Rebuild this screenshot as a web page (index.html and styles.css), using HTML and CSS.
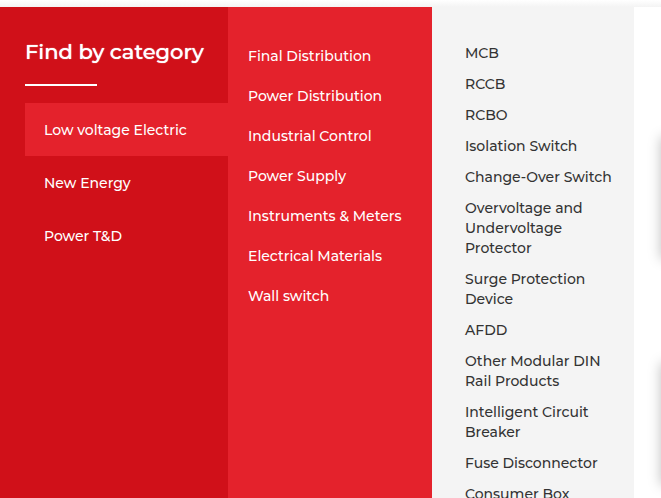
FILE: index.html
```html
<!DOCTYPE html>
<html lang="en">
<head>
<meta charset="utf-8">
<meta name="viewport" content="width=device-width, initial-scale=1">
<title>Find by category</title>
<link rel="stylesheet" href="styles.css">
</head>
<body>
<div class="topbar"></div>
<div class="mega">
  <nav class="categories" aria-label="Categories">
    <h2 class="title">Find by category</h2>
    <ul class="list">
      <li><a class="category active" href="#">Low voltage Electric</a></li>
      <li><a class="category" href="#">New Energy</a></li>
      <li><a class="category" href="#">Power T&amp;D</a></li>
    </ul>
  </nav>
  <nav class="groups" aria-label="Groups">
    <ul class="list">
      <li><a class="group" href="#">Final Distribution</a></li>
      <li><a class="group" href="#">Power Distribution</a></li>
      <li><a class="group" href="#">Industrial Control</a></li>
      <li><a class="group" href="#">Power Supply</a></li>
      <li><a class="group" href="#">Instruments &amp; Meters</a></li>
      <li><a class="group" href="#">Electrical Materials</a></li>
      <li><a class="group" href="#">Wall switch</a></li>
    </ul>
  </nav>
  <nav class="products" aria-label="Products">
    <ul class="list product-list">
      <li><a href="#">MCB</a></li>
      <li><a href="#">RCCB</a></li>
      <li><a href="#">RCBO</a></li>
      <li><a href="#">Isolation Switch</a></li>
      <li><a href="#">Change-Over Switch</a></li>
      <li><a href="#">Overvoltage and Undervoltage Protector</a></li>
      <li><a href="#">Surge Protection Device</a></li>
      <li><a href="#">AFDD</a></li>
      <li><a href="#">Other Modular DIN Rail Products</a></li>
      <li><a href="#">Intelligent Circuit Breaker</a></li>
      <li><a href="#">Fuse Disconnector</a></li>
      <li><a href="#">Consumer Box</a></li>
    </ul>
  </nav>
  <div class="gallery">
    <div class="card"></div>
    <div class="card"></div>
  </div>
</div>
</body>
</html>
```
FILE: styles.css
```css
* { box-sizing: border-box; }
body {
  margin: 0;
  height: 100vh;
  overflow: hidden;
  display: flex;
  flex-direction: column;
  background: #fff;
  font-family: Montserrat, Inter, sans-serif;
  font-size: 14px;
  font-weight: 500;
  line-height: 20px;
}
a { color: inherit; text-decoration: none; }
.topbar {
  flex: none;
  height: 7px;
  background: linear-gradient(#fff, #f4f4f4);
}
.mega {
  flex: 1;
  min-height: 0;
  display: grid;
  grid-template-columns: 228fr 204fr 202fr 27fr;
}
.list { list-style: none; margin: 0; padding: 0; }
.categories {
  background: #d01019;
  color: #fff;
  padding: 30px 0 0 25px;
}
.title {
  margin: 0 0 17px;
  font-size: 21px;
  line-height: 30px;
  font-weight: 500;
  text-shadow: 0 0 1px #fff;
  white-space: nowrap;
}
.title::after {
  content: "";
  display: block;
  width: 72px;
  height: 2px;
  margin-top: 17px;
  background: #fff;
}
.category { display: block; padding: 17px 19px 16px; }
.active { background: #e4222c; }
.groups {
  background: #e4222c;
  color: #fff;
  padding: 29px 20px 0;
}
.group { display: block; padding: 10px 0; white-space: nowrap; }
.products {
  min-height: 0;
  overflow: hidden;
  background: #f4f4f4;
  color: #333;
  padding: 36px 20px 0 33px;
}
.product-list { display: grid; gap: 11px; }
.gallery {
  min-width: 0;
  overflow: hidden;
  padding: 130px 0 0 27px;
  display: flex;
  flex-direction: column;
  gap: 104px;
}
.card {
  flex: none;
  width: 200px;
  height: 122px;
  background: #fff;
  box-shadow: 0 0 12px rgba(0, 0, 0, 0.25);
}
```
